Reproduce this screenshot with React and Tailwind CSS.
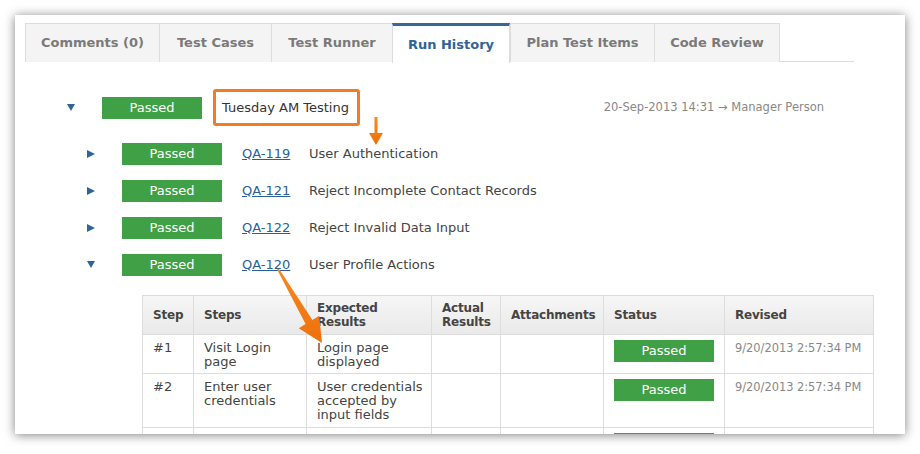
import React from 'react';

const tabs = [
  { label: 'Comments (0)', w: 'w-[134px]' },
  { label: 'Test Cases', w: 'w-[112px]' },
  { label: 'Test Runner', w: 'w-[121px]' },
  { label: 'Run History', w: 'w-[118px]', active: true },
  { label: 'Plan Test Items', w: 'w-[144px]' },
  { label: 'Code Review', w: 'w-[126px]' },
];

const cases = [
  { key: 'QA-119', title: 'User Authentication' },
  { key: 'QA-121', title: 'Reject Incomplete Contact Records' },
  { key: 'QA-122', title: 'Reject Invalid Data Input' },
  { key: 'QA-120', title: 'User Profile Actions', open: true },
];

const steps = [
  { n: '#1', step: ['Visit Login', 'page'], expected: ['Login page', 'displayed'], h: 'h-[39px]' },
  { n: '#2', step: ['Enter user', 'credentials'], expected: ['User credentials', 'accepted by', 'input fields'], h: 'h-[54px]' },
  { n: '#3', step: [], expected: [], h: 'h-[40px]' },
];

const Badge = () => (
  <div className="w-[100px] h-[22px] bg-[#3fa046] text-white text-[13px] flex items-center justify-center shrink-0">
    Passed
  </div>
);

const TriDown = () => (
  <svg width="8" height="7" viewBox="0 0 8 7" className="shrink-0">
    <path d="M0 0 H8 L4 7 Z" fill="#2f6496" />
  </svg>
);

const TriRight = () => (
  <svg width="8" height="8" viewBox="0 0 8 8" className="shrink-0">
    <path d="M0 0 L8 4 L0 8 Z" fill="#2f6496" />
  </svg>
);

export default function App() {
  return (
    <div className="relative w-[920px] h-[454px] bg-white overflow-hidden text-[#444]" style={{ fontFamily: '"DejaVu Sans", Verdana, sans-serif' }}>
      <div className="absolute left-[15px] top-[15px] w-[890px] h-[419px] bg-white shadow-[0_1px_10px_rgba(0,0,0,0.5)] overflow-hidden pt-[8px] pl-[10px]">
        {/* tabs */}
        <div className="flex w-[829px] h-[39px] border-b border-[#dddddd]">
          {tabs.map((t) =>
            t.active ? (
              <div key={t.label} className={`${t.w} h-[40px] -mb-px bg-white border-t-[3px] border-t-[#36689a] border-x border-x-[#dddddd] flex items-center justify-center text-[13px] font-bold text-[#2f6496]`}>
                {t.label}
              </div>
            ) : (
              <div key={t.label} className={`${t.w} h-[39px] bg-[#f4f4f4] border-t border-l border-[#dddddd] last:border-r flex items-center justify-center text-[13px] font-bold text-[#7a7a7a]`}>
                {t.label}
              </div>
            )
          )}
        </div>

        {/* run row */}
        <div className="flex items-center w-[799px] pl-[42px] mt-[27px] h-[37px]">
          <TriDown />
          <div className="ml-[27px]">
            <Badge />
          </div>
          <div className="ml-[11px] w-[147px] h-[37px] border-[3px] border-[#f47b20] rounded-[3px] flex items-center pl-[6px] text-[13px] text-[#333] whitespace-nowrap">
            Tuesday AM Testing
          </div>
          <div className="flex-1 text-right text-[11.5px] text-[#888] whitespace-nowrap">20-Sep-2013 14:31 → Manager Person</div>
        </div>

        {/* cases */}
        <div className="mt-[9px]">
          {cases.map((c) => (
            <div key={c.key} className="flex items-center h-[37px] pl-[62px]">
              {c.open ? <TriDown /> : <TriRight />}
              <div className="ml-[27px]">
                <Badge />
              </div>
              <a className="ml-[20px] w-[47px] shrink-0 whitespace-nowrap text-[13px] text-[#2a5f9a] underline">{c.key}</a>
              <span className="ml-[20px] text-[13px] text-[#444] whitespace-nowrap">{c.title}</span>
            </div>
          ))}
        </div>

        {/* steps table */}
        <table className="ml-[117px] mt-[12px] w-[731px] table-fixed border-collapse text-[13px] leading-[14px]">
          <colgroup>
            <col className="w-[51px]" />
            <col className="w-[113px]" />
            <col className="w-[125px]" />
            <col className="w-[69px]" />
            <col className="w-[103px]" />
            <col className="w-[121px]" />
            <col className="w-[149px]" />
          </colgroup>
          <thead>
            <tr className="h-[39px] bg-gradient-to-b from-[#f6f6f6] to-[#e9e9e9]">
              {['Step', 'Steps', 'Expected Results', 'Actual Results', 'Attachments', 'Status', 'Revised'].map((h) => (
                <th key={h} className="border border-[#dddddd] text-left font-bold text-[12px] tracking-[-0.2px] text-[#444] pl-[10px] pr-[4px] align-middle">
                  {h}
                </th>
              ))}
            </tr>
          </thead>
          <tbody>
            {steps.map((s) => (
              <tr key={s.n} className={s.h}>
                <td className="border border-[#dddddd] align-top pt-[6px] pl-[10px]">{s.step.length ? s.n : ''}</td>
                <td className="border border-[#dddddd] align-top pt-[6px] pl-[10px]">
                  {s.step.map((l) => (
                    <div key={l}>{l}</div>
                  ))}
                </td>
                <td className="border border-[#dddddd] align-top pt-[6px] pl-[10px]">
                  {s.expected.map((l) => (
                    <div key={l}>{l}</div>
                  ))}
                </td>
                <td className="border border-[#dddddd]" />
                <td className="border border-[#dddddd]" />
                <td className="border border-[#dddddd] align-top pt-[5px] pl-[10px]">
                  <Badge />
                </td>
                <td className="border border-[#dddddd] align-top pt-[6px] pl-[10px] text-[11.4px] text-[#888] whitespace-nowrap">
                  {s.step.length ? '9/20/2013 2:57:34 PM' : ''}
                </td>
              </tr>
            ))}
          </tbody>
        </table>
      </div>

      {/* callout arrows */}
      <svg className="absolute left-0 top-0 pointer-events-none" width="920" height="454" viewBox="0 0 920 454">
        <defs>
          <linearGradient id="org" x1="0" y1="0" x2="0" y2="1">
            <stop offset="0" stopColor="#f58a1f" />
            <stop offset="1" stopColor="#ef6f0c" />
          </linearGradient>
        </defs>
        <path d="M374.5 117 H377.5 V133 H383 L376 145 L369 133 H374.5 Z" fill="url(#org)" />
        <path d="M277.1 269.5 L278.9 268.5 L312.4 319.9 L319.2 315.7 L322 343 L298.8 328.3 L305.6 324.1 Z" fill="url(#org)" />
      </svg>
    </div>
  );
}
